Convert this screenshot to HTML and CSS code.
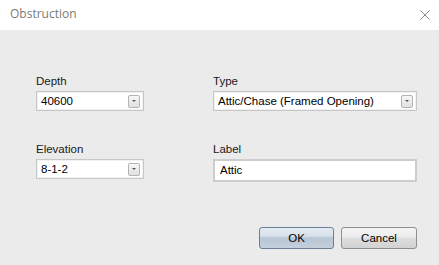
FILE: index.html
```html
<!DOCTYPE html>
<html lang="en">
  <head>
    <meta charset="UTF-8" />
    <title>Obstruction</title>
    <link rel="stylesheet" href="styles.css">
  </head>
  <body>
    <div class="dialog">
      <div class="titlebar">
        <span class="title">Obstruction</span>
        <svg class="close" width="10" height="10" viewBox="0 0 10 10">
          <path d="M0.5 0.5 L9.5 9.5 M9.5 0.5 L0.5 9.5" stroke="#8a8a8a" stroke-width="1" fill="none" />
        </svg>
      </div>

      <div class="content">
        <div class="fields">
          <div class="field">
            <label>Depth</label>
            <div class="combo">
              <span class="value">40600</span>
              <span class="drop"><i></i></span>
            </div>
          </div>
          <div class="field">
            <label>Type</label>
            <div class="combo">
              <span class="value">Attic/Chase (Framed Opening)</span>
              <span class="drop"><i></i></span>
            </div>
          </div>
          <div class="field row2">
            <label>Elevation</label>
            <div class="combo">
              <span class="value">8-1-2</span>
              <span class="drop"><i></i></span>
            </div>
          </div>
          <div class="field row2">
            <label>Label</label>
            <div class="textbox">Attic</div>
          </div>
        </div>

        <div class="buttons">
          <button class="btn default">OK</button>
          <button class="btn">Cancel</button>
        </div>
      </div>
    </div>
  </body>
</html>
```

FILE: styles.css
```css
body {
  margin: 0;
  font-family: "Liberation Sans", Arial, sans-serif;
  font-size: 11.5px;
  color: #000;
}
.dialog {
  width: 439px;
  height: 265px;
  background: #ebebeb;
  overflow: hidden;
}
.titlebar {
  height: 30px;
  background: #fff;
  display: flex;
  align-items: center;
  justify-content: space-between;
  padding: 0 9px 0 10px;
}
.title {
  font-family: "Open Sans", "Noto Sans", sans-serif;
  font-size: 12px;
  color: #7a7a7a;
  margin-top: -3px;
}
.close {
  margin-top: -1px;
}
.content {
  padding: 44px 22px 0 36px;
}
.fields {
  display: grid;
  grid-template-columns: 108px 204px;
  column-gap: 69px;
  row-gap: 31px;
}
.field {
  display: flex;
  flex-direction: column;
}
.field label {
  line-height: 14px;
  margin-bottom: 3px;
  color: #1a1a1a;
}
.combo {
  height: 20px;
  box-sizing: border-box;
  background: #fff;
  border: 1px solid #c6c6c6;
  box-shadow: inset 0 0 0 1px #f1f1f1;
  display: flex;
  align-items: center;
  justify-content: space-between;
  padding: 0 3px 0 4px;
}
.drop {
  width: 12px;
  height: 13px;
  box-sizing: border-box;
  border: 1px solid #b3b3b3;
  border-radius: 2px;
  background: linear-gradient(#f7f7f7, #e0e0e0);
  display: flex;
  align-items: center;
  justify-content: center;
}
.drop i {
  width: 0;
  height: 0;
  border-left: 2px solid transparent;
  border-right: 2px solid transparent;
  border-top: 2px solid #555;
}
.textbox {
  height: 23px;
  box-sizing: border-box;
  background: #fff;
  border: 2px solid #cdcdcd;
  padding: 0 5px;
  line-height: 19px;
}
.buttons {
  display: flex;
  justify-content: flex-end;
  gap: 7px;
  margin-top: 45px;
}
.btn {
  height: 22px;
  width: 76px;
  font-family: "Liberation Sans", Arial, sans-serif;
  font-size: 11.5px;
  color: #000;
  border: 1px solid #8e8f8f;
  border-radius: 3px;
  background: linear-gradient(#f4f4f4 0%, #ececec 45%, #dedede 50%, #d2d2d2 100%);
  padding: 0;
}
.btn.default {
  width: 75px;
  border-color: #6b7f99;
  background: linear-gradient(#e3eaf2 0%, #d8e1eb 40%, #b8c5d4 50%, #c4d0dd 100%);
}
```
